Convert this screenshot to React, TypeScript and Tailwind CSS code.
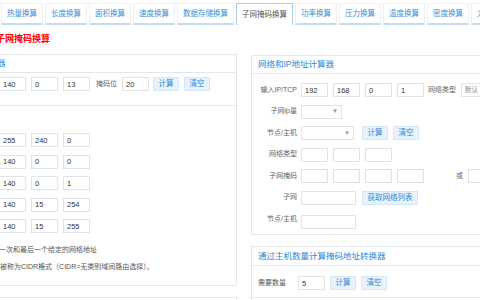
import React from "react";

const tabs = [
  { name: "热量换算", w: "w-[42px]" },
  { name: "长度换算", w: "w-[42px]" },
  { name: "面积换算", w: "w-[42px]" },
  { name: "速度换算", w: "w-[42px]" },
  { name: "数据存储换算", w: "w-[57px]" },
  { name: "子网掩码换算", w: "w-[57px]", active: true },
  { name: "功率换算", w: "w-[42px]" },
  { name: "压力换算", w: "w-[42px]" },
  { name: "温度换算", w: "w-[42px]" },
  { name: "密度换算", w: "w-[42px]" },
  { name: "力学换算", w: "w-[42px]" },
];

const Box = ({ v = "", w = "w-[27px]" }: { v?: string; w?: string }) => (
  <input
    readOnly
    defaultValue={v}
    className={`${w} h-[14px] shrink-0 border border-[#dfe4ea] bg-white pl-[3px] text-[7.5px] text-[#333] outline-none`}
  />
);

const Btn = ({ t, w = "w-[26px]" }: { t: string; w?: string }) => (
  <button
    className={`${w} h-[14px] shrink-0 bg-[#e8f2fc] border border-[#d6e7f6] text-[#2c8ae0] text-[7.5px] leading-none flex items-center justify-center`}
  >
    {t}
  </button>
);

const Sel = ({ w, v = "" }: { w: string; v?: string }) => (
  <div
    className={`${w} h-[14px] shrink-0 border border-[#dfe4ea] bg-white flex items-center justify-between px-[3px] text-[6.5px] text-[#666]`}
  >
    <span>{v}</span>
    <span className="text-[6px] text-[#999]">▼</span>
  </div>
);

const Lbl = ({ t }: { t: string }) => (
  <span className="w-[38px] shrink-0 text-right text-[7px] text-[#666] whitespace-nowrap">{t}</span>
);

const LeftRow = ({ label, vals }: { label: string; vals: string[] }) => (
  <div className="flex items-center gap-[5px] h-[14px]">
    <span className="w-[54px] shrink-0 text-right text-[7px] text-[#666]">{label}</span>
    {vals.map((v, i) => (
      <Box key={i} v={v} />
    ))}
  </div>
);

const App = () => {
  return (
    <div
      className="w-[480px] h-[300px] overflow-hidden bg-white relative"
      style={{ fontFamily: '"Liberation Sans", "Noto Sans CJK SC", sans-serif' }}
    >
      {/* tabs */}
      <div className="flex gap-[2px] pl-[1px] pt-[3px] h-[25px] whitespace-nowrap">
        {tabs.map((t) => (
          <div
            key={t.name}
            className={
              t.active
                ? `${t.w} h-[22px] shrink-0 border border-b-0 border-[#a9cdee] bg-white flex items-center justify-center text-[7.5px] text-[#555]`
                : `${t.w} h-[22px] shrink-0 border border-[#eef1f4] border-b-2 border-b-[#c2dcf2] bg-white flex items-center justify-center text-[7.5px] text-[#3d8fd6]`
            }
          >
            {t.name}
          </div>
        ))}
      </div>

      {/* title */}
      <div className="h-[29px] flex items-center -ml-[4px] text-[9px] font-bold text-[#ff0000] whitespace-nowrap">
        子网掩码换算
      </div>

      <div className="flex items-start">
        {/* left column */}
        <div className="-ml-[100px] w-[337px] shrink-0">
          <div className="border border-[#e3e8ee]">
            <div className="h-[18px] border-b border-[#e3e8ee] flex items-center pl-[37px] text-[8.5px] text-[#2b88d8] whitespace-nowrap">
              IP子网掩码计算器
            </div>
            <div className="pt-[4px] pb-[14px] pl-[7px] border-b border-[#e3e8ee]">
              <div className="flex items-center gap-[5px] h-[14px]">
                <span className="w-[54px] shrink-0 text-right text-[7px] text-[#666]">IP地址</span>
                <Box v="172" />
                <Box v="140" />
                <Box v="0" />
                <Box v="13" />
                <span className="ml-[1px] text-[7px] text-[#666]">掩码位</span>
                <Box v="20" />
                <div className="flex gap-[5px] -ml-[1px]">
                  <Btn t="计算" />
                  <Btn t="清空" />
                </div>
              </div>
            </div>
            <div className="pt-[27px] pl-[7px] pb-[12px]">
              <div className="flex flex-col gap-[7.5px]">
                <LeftRow label="子网掩码" vals={["255", "255", "240", "0"]} />
                <LeftRow label="网络地址" vals={["172", "140", "0", "0"]} />
                <LeftRow label="第一个可用" vals={["172", "140", "0", "1"]} />
                <LeftRow label="最后可用" vals={["172", "140", "15", "254"]} />
                <LeftRow label="广播地址" vals={["172", "140", "15", "255"]} />
              </div>
              <div className="mt-[11px] ml-[84px] text-[7px] leading-[12px] text-[#555] whitespace-nowrap">
                第一次和最后一个给定的网络地址
              </div>
              <div className="mt-[5px] ml-[85px] text-[7px] leading-[12px] text-[#555] whitespace-nowrap">
                即被称为CIDR格式（CIDR=无类别域间路由选择）。
              </div>
            </div>
          </div>
          <div className="mt-[11px] border border-[#e3e8ee]">
            <div className="h-[18px] flex items-center pl-[98px] text-[8.5px] text-[#2b88d8] whitespace-nowrap">
              子网掩码位数换算器
            </div>
          </div>
        </div>

        {/* right column */}
        <div className="ml-[14px] w-[260px] shrink-0 mt-[1px]">
          <div className="border border-[#e3e8ee]">
            <div className="h-[18px] border-b border-[#e3e8ee] flex items-center pl-[6px] text-[8.5px] text-[#2b88d8]">
              网络和IP地址计算器
            </div>
            <div className="pt-[9px] pb-[8px] pl-[7px] flex flex-col gap-[7.5px]">
              <div className="flex items-center h-[14px]">
                <Lbl t="输入IP/TCP" />
                <div className="ml-[4px] flex items-center gap-[5px]">
                  <Box v="192" />
                  <Box v="168" />
                  <Box v="0" />
                  <Box v="1" />
                  <span className="ml-[-1px] text-[7px] text-[#666] whitespace-nowrap">网络类型</span>
                  <div className="w-[50px] h-[14px] shrink-0 border border-[#dfe4ea] flex items-center pl-[3px] text-[6.5px] text-[#888]">
                    默认
                  </div>
                </div>
              </div>
              <div className="flex items-center h-[14px]">
                <Lbl t="子网ip量" />
                <div className="ml-[4px]">
                  <Sel w="w-[41px]" />
                </div>
              </div>
              <div className="flex items-center h-[14px]">
                <Lbl t="节点/主机" />
                <div className="ml-[4px] flex items-center gap-[5px]">
                  <Sel w="w-[53px]" />
                  <div className="ml-[3px] flex gap-[5px]">
                    <Btn t="计算" />
                    <Btn t="清空" />
                  </div>
                </div>
              </div>
              <div className="flex items-center h-[14px]">
                <Lbl t="网络类型" />
                <div className="ml-[4px] flex items-center gap-[5px]">
                  <Box />
                  <Box />
                  <Box />
                </div>
              </div>
              <div className="flex items-center h-[14px]">
                <Lbl t="子网掩码" />
                <div className="ml-[4px] flex items-center gap-[5px]">
                  <Box />
                  <Box />
                  <Box />
                  <Box />
                  <span className="ml-[27px] text-[7px] text-[#666]">或</span>
                  <Box w="w-[40px]" />
                </div>
              </div>
              <div className="flex items-center h-[14px]">
                <Lbl t="子网" />
                <div className="ml-[4px] flex items-center gap-[6px]">
                  <Box w="w-[55px]" />
                  <Btn t="获取网络列表" w="w-[56px]" />
                </div>
              </div>
              <div className="flex items-center h-[14px]">
                <Lbl t="节点/主机" />
                <div className="ml-[4px]">
                  <Box w="w-[55px]" />
                </div>
              </div>
            </div>
          </div>

          <div className="mt-[11px] border border-[#e3e8ee]">
            <div className="h-[19px] border-b border-[#e3e8ee] flex items-center pl-[6px] text-[8.5px] text-[#2b88d8]">
              通过主机数量计算掩码地址转换器
            </div>
            <div className="pt-[10px] pb-[7px] pl-[6px] border-b border-[#e3e8ee] flex items-center gap-[5px]">
              <span className="w-[35px] text-[7px] text-[#555]">需要数量</span>
              <Box v="5" />
              <Btn t="计算" />
              <Btn t="清空" />
            </div>
            <div className="h-[30px]" />
          </div>
        </div>
      </div>
    </div>
  );
};

export default App;
